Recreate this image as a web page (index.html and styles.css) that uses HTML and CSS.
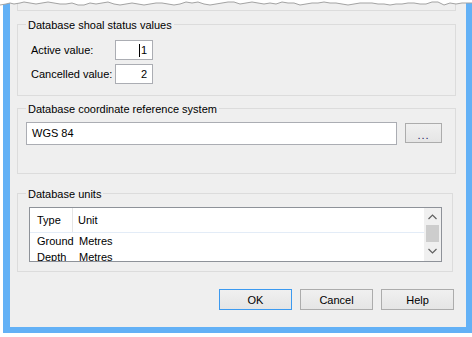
FILE: index.html
```html
<!DOCTYPE html>
<html lang="en">
<head>
    <meta charset="UTF-8">
    <title>Database settings</title>
    <link rel="stylesheet" href="styles.css">
</head>
<body>

    <div class="window">
        <div class="dialog">
            <div class="prev-group"></div>

            <div class="group group-status">
                <div class="caption">Database shoal status values</div>
                <div class="status-grid">
                    <label>Active value:</label>
                    <div class="field num"><span class="caret"></span>1</div>
                    <label>Cancelled value:</label>
                    <div class="field num">2</div>
                </div>
            </div>

            <div class="group group-crs">
                <div class="caption">Database coordinate reference system</div>
                <div class="crs-row">
                    <div class="field crs">WGS 84</div>
                    <button class="btn btn-browse">...</button>
                </div>
            </div>

            <div class="group group-units">
                <div class="caption">Database units</div>
                <div class="list">
                    <div class="list-body">
                        <div class="list-head">
                            <span class="col-type">Type</span>
                            <span class="col-unit">Unit</span>
                        </div>
                        <div class="list-row">
                            <span class="col-type">Ground</span>
                            <span class="col-unit">Metres</span>
                        </div>
                        <div class="list-row">
                            <span class="col-type">Depth</span>
                            <span class="col-unit">Metres</span>
                        </div>
                    </div>
                    <div class="scrollbar">
                        <div class="sb-arrow">
                            <svg width="9" height="6" viewBox="0 0 9 6"><polyline points="0.5,5 4.5,1 8.5,5" fill="none" stroke="#606060" stroke-width="1.2"/></svg>
                        </div>
                        <div class="sb-thumb"></div>
                        <div class="sb-arrow">
                            <svg width="9" height="6" viewBox="0 0 9 6"><polyline points="0.5,1 4.5,5 8.5,1" fill="none" stroke="#606060" stroke-width="1.2"/></svg>
                        </div>
                    </div>
                </div>
            </div>

            <div class="buttons">
                <button class="btn btn-default">OK</button>
                <button class="btn">Cancel</button>
                <button class="btn">Help</button>
            </div>
        </div>

        <!-- torn top edge of the screenshot -->
        <svg class="tear" width="472" height="8" viewBox="0 0 472 8">
            <polygon fill="#fff" points="0,0 472,0 472,3 466,3 462,3 456,4 450,3 444,5 438,2 432,2 426,4 420,4 414,3 408,3 402,4 396,4 390,5 384,4 378,4 372,3 366,3 360,3 354,4 348,5 342,4 336,3 330,3 324,2 318,3 312,3 306,4 300,5 294,3 288,3 282,2 276,4 270,3 264,4 258,3 252,2 246,3 240,4 234,2 228,2 222,3 216,4 210,5 204,4 198,2 192,3 186,2 180,4 174,5 168,4 162,3 156,3 150,4 144,5 138,4 132,3 126,4 120,5 114,4 108,2 102,3 96,4 90,3 84,5 78,5 72,3 66,4 60,4 54,3 48,2 42,3 36,4 30,3 24,2 20,3 14,4 10,3 6,4 0,5"/>
            <polyline fill="none" stroke="#a3a3a3" stroke-width="1" points="0,5 6,4 10,3 14,4 20,3 24,2 30,3 36,4 42,3 48,2 54,3 60,4 66,4 72,3 78,5 84,5 90,3 96,4 102,3 108,2 114,4 120,5 126,4 132,3 138,4 144,5 150,4 156,3 162,3 168,4 174,5 180,4 186,2 192,3 198,2 204,4 210,5 216,4 222,3 228,2 234,2 240,4 246,3 252,2 258,3 264,4 270,3 276,4 282,2 288,3 294,3 300,5 306,4 312,3 318,3 324,2 330,3 336,3 342,4 348,5 354,4 360,3 366,3 372,3 378,4 384,4 390,5 396,4 402,4 408,3 414,3 420,4 426,4 432,2 438,2 444,5 450,3 456,4 462,3 466,3 472,3"/>
        </svg>
    </div>

</body>
</html>
```

FILE: styles.css
```css
body { margin: 0; background: #fff; font: 11px "Liberation Sans", Arial, sans-serif; color: #000; }

.window { position: relative; margin-left: 3px; width: 469px; height: 333px; box-sizing: border-box; padding: 0 6px 6px 7px; background: #63b1f6; }
.dialog { height: 327px; background: #efefef; overflow: hidden; }
.tear { position: absolute; top: 0; left: -3px; }

.prev-group { height: 11px; margin: 0 10px 0 7px; box-sizing: border-box; border: 1px solid #dcdcdc; border-top: 0; }

.group { margin: 0 10px 0 7px; box-sizing: border-box; border: 1px solid #dcdcdc; }
.caption { display: table; margin: -7px 0 0 8px; padding: 0 2px; line-height: 14px; background: #efefef; }

.group-status { margin-top: 13px; height: 72px; }
.status-grid { display: grid; grid-template-columns: 84px 38px; row-gap: 4px; align-items: center; margin: 8px 0 0 13px; }

.field { height: 20px; box-sizing: border-box; border: 1px solid #abadb3; background: #fff; line-height: 18px; white-space: nowrap; }
.num { text-align: right; padding-right: 5px; }
.caret { display: inline-block; width: 1px; height: 13px; margin-right: 1px; background: #000; vertical-align: -3px; }

.group-crs { margin-top: 12px; height: 66px; }
.crs-row { display: flex; align-items: flex-start; gap: 8px; margin: 6px 0 0 8px; }
.crs { width: 371px; height: 23px; line-height: 21px; padding-left: 5px; }

.btn { height: 21px; width: 73px; padding: 0; box-sizing: border-box; border: 1px solid #acacac; background: linear-gradient(#f0f0f0, #e5e5e5); font: 11px "Liberation Sans", Arial, sans-serif; color: #000; }
.btn-browse { width: 37px; height: 20px; margin-top: 1px; padding-top: 3px; color: #20205a; letter-spacing: 1px; }
.btn-default { border-color: #3c9af0; }

.group-units { margin-top: 19px; margin-right: 13px; height: 79px; }
.list { display: flex; width: 413px; height: 55px; margin: 6px 0 0 11px; box-sizing: border-box; border: 1px solid #8e9299; background: #fff; }
.list-body { flex: 1; overflow: hidden; }
.list-head { display: flex; height: 25px; box-sizing: border-box; border-bottom: 1px solid #e3ecf7; }
.list-head span { padding-top: 6px; }
.list-head .col-type { border-right: 1px solid #e5e5e5; }
.list-row { display: flex; height: 16px; line-height: 16px; }
.col-type { width: 43px; padding-left: 7px; box-sizing: border-box; }
.list-row .col-type { width: 44px; }
.col-unit { padding-left: 5px; }

.scrollbar { width: 17px; display: flex; flex-direction: column; background: #f0f0f0; }
.sb-arrow { height: 17px; display: flex; align-items: center; justify-content: center; }
.sb-thumb { height: 17px; margin: 0 2px; background: #cdcdcd; }

.buttons { display: flex; justify-content: flex-end; gap: 8px; margin-top: 17px; padding-right: 12px; }
```
